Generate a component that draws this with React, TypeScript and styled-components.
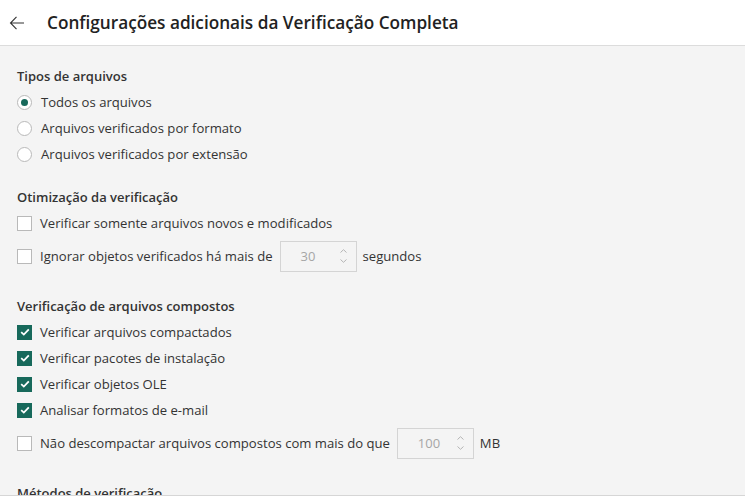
import React from 'react';
import styled, {createGlobalStyle} from 'styled-components';

const GlobalStyle = createGlobalStyle`
  html, body {
    margin: 0;
    padding: 0;
    height: 100%;
    overflow: hidden;
  }
  body {
    font-family: "Open Sans", "Noto Sans", sans-serif;
    color: #333;
    background: #f4f4f4;
  }
`;

const TEAL = '#17695b';

const Page = styled.div`
  height: 100vh;
  display: flex;
  flex-direction: column;
`;

const Header = styled.header`
  height: 45px;
  flex: none;
  background: #fff;
  border-bottom: 1px solid #dcdcdc;
  display: flex;
  align-items: center;
  gap: 22px;
  padding-left: 9px;
`;

const BackButton = styled.button`
  border: 0;
  background: none;
  padding: 0;
  width: 16px;
  height: 16px;
  display: flex;
  cursor: pointer;
  color: #333;
`;

const Title = styled.h1`
  margin: 0;
  font-size: 17.2px;
  font-weight: 600;
  color: #222;
`;

const Content = styled.main`
  flex: 1;
  overflow: hidden;
  padding: 17px 17px 0;
  display: flex;
  flex-direction: column;
  gap: 17px;
`;

const Section = styled.section`
  display: flex;
  flex-direction: column;
`;

const SectionTitle = styled.h2`
  margin: 0;
  height: 26px;
  line-height: 26px;
  font-size: 13px;
  font-weight: 600;
  color: #333;
`;

const Row = styled.label<{$withInput?: boolean}>`
  display: flex;
  align-items: center;
  gap: 9px;
  height: ${p => (p.$withInput ? '32px' : '26px')};
  margin: ${p => (p.$withInput ? '4px 0' : '0')};
  font-size: 13.1px;
  color: #333;
`;

const Radio = styled.span<{$checked?: boolean}>`
  width: 13px;
  height: 13px;
  border-radius: 50%;
  border: 1px solid #b9b9b9;
  background: #fff;
  display: flex;
  align-items: center;
  justify-content: center;
  flex: none;

  &::after {
    content: '';
    width: 7px;
    height: 7px;
    border-radius: 50%;
    background: ${TEAL};
    display: ${p => (p.$checked ? 'block' : 'none')};
  }
`;

const Box = styled.span<{$checked?: boolean}>`
  width: ${p => (p.$checked ? '15px' : '13px')};
  height: ${p => (p.$checked ? '15px' : '13px')};
  border: ${p => (p.$checked ? '0' : '1px solid #b9b9b9')};
  background: ${p => (p.$checked ? TEAL : '#fff')};
  display: flex;
  align-items: center;
  justify-content: center;
  flex: none;
  margin-right: -1px;
`;

const NumberField = styled.span`
  width: 77px;
  height: 31px;
  border: 1px solid #d4d4d4;
  background: #f4f4f4;
  display: flex;
  align-items: center;
  justify-content: space-between;
  padding: 0 9px 0 20px;
  box-sizing: border-box;
  color: #a6a6a6;
  font-size: 13px;
  margin: 0 -3px 0 -2px;
`;

const Spinner = styled.span`
  display: flex;
  flex-direction: column;
  gap: 6px;
`;

const Check = () => (
  <svg width="10" height="8" viewBox="0 0 10 8">
    <path d="M1.2 4.2 L3.8 6.6 L8.8 1.4" fill="none" stroke="#fff" strokeWidth="1.8" />
  </svg>
);

const Chevron = ({up}: {up?: boolean}) => (
  <svg width="7" height="4" viewBox="0 0 7 4">
    <path
      d={up ? 'M0.5 3.5 L3.5 0.7 L6.5 3.5' : 'M0.5 0.5 L3.5 3.3 L6.5 0.5'}
      fill="none"
      stroke="#b4b4b4"
      strokeWidth="1"
    />
  </svg>
);

const Num = ({value}: {value: string}) => (
  <NumberField>
    {value}
    <Spinner>
      <Chevron up />
      <Chevron />
    </Spinner>
  </NumberField>
);

const Footer = styled.footer`
  height: 3px;
  flex: none;
  background: #fff;
  border-top: 1px solid #d6d6d6;
`;

export default function App() {
  return (
    <Page>
      <GlobalStyle />
      <Header>
        <BackButton aria-label="Voltar">
          <svg width="16" height="16" viewBox="0 0 16 16">
            <path d="M1.5 8 H15 M7.5 1.8 L1.5 8 L7.5 14.2" fill="none" stroke="#333" strokeWidth="1.1" />
          </svg>
        </BackButton>
        <Title>Configurações adicionais da Verificação Completa</Title>
      </Header>
      <Content>
        <Section>
          <SectionTitle>Tipos de arquivos</SectionTitle>
          <Row><Radio $checked />Todos os arquivos</Row>
          <Row><Radio />Arquivos verificados por formato</Row>
          <Row><Radio />Arquivos verificados por extensão</Row>
        </Section>
        <Section>
          <SectionTitle>Otimização da verificação</SectionTitle>
          <Row><Box />Verificar somente arquivos novos e modificados</Row>
          <Row $withInput>
            <Box />Ignorar objetos verificados há mais de <Num value="30" /> segundos
          </Row>
        </Section>
        <Section>
          <SectionTitle>Verificação de arquivos compostos</SectionTitle>
          <Row><Box $checked><Check /></Box>Verificar arquivos compactados</Row>
          <Row><Box $checked><Check /></Box>Verificar pacotes de instalação</Row>
          <Row><Box $checked><Check /></Box>Verificar objetos OLE</Row>
          <Row><Box $checked><Check /></Box>Analisar formatos de e-mail</Row>
          <Row $withInput>
            <Box />Não descompactar arquivos compostos com mais do que <Num value="100" /> MB
          </Row>
        </Section>
        <Section>
          <SectionTitle>Métodos de verificação</SectionTitle>
        </Section>
      </Content>
      <Footer />
    </Page>
  );
}
